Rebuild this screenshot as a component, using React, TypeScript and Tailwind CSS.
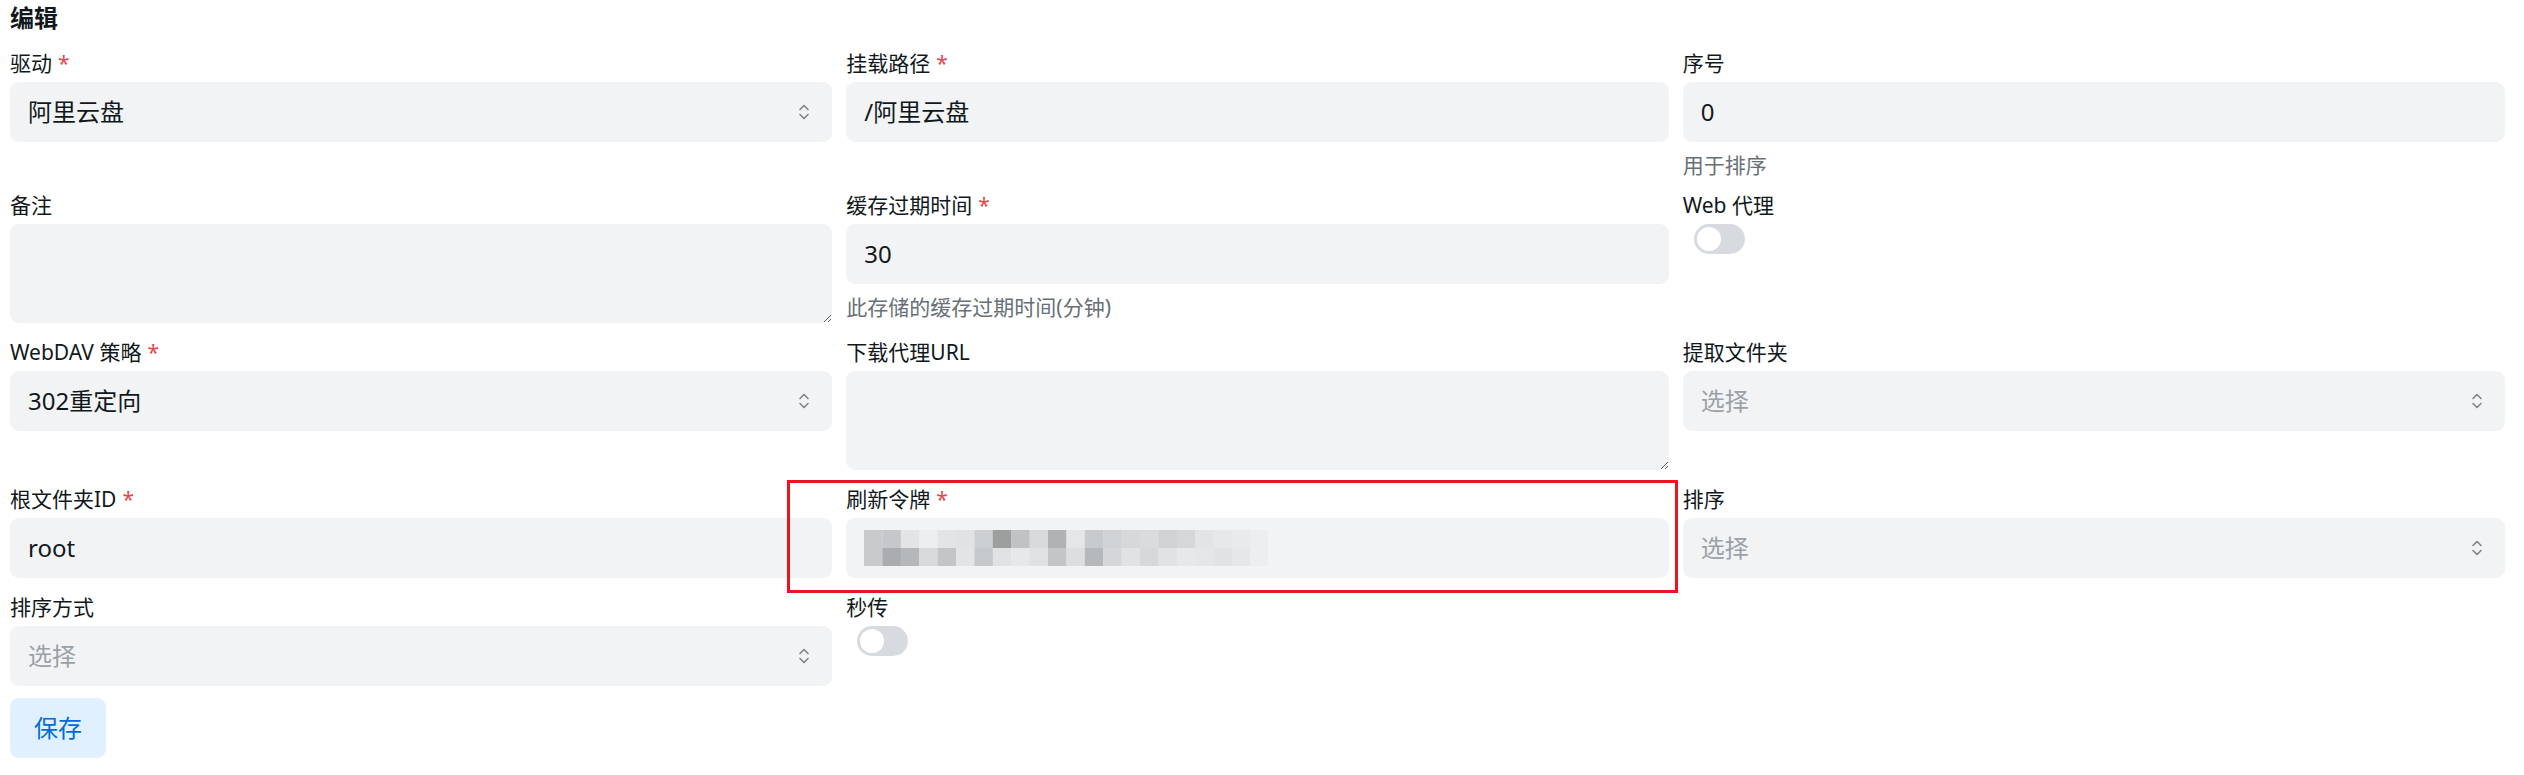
import React from "react";

const font = { fontFamily: '"Noto Sans", "Noto Sans CJK SC", sans-serif' };

const mosaic = [
  ["#c8cacc", "#c5c8ca", "#e2e4e6", "#eceef0", "#e2e4e6", "#e0e2e4", "#cdd0d2", "#9c9f9d", "#c0c2c4", "#d8dadc", "#b0b3b5", "#e4e6e8", "#c8cbcd", "#d0d3d5", "#d6d8da", "#d9dbdd", "#d0d3d5", "#d5d7d9", "#e2e4e6", "#e6e8ea", "#e8eaec", "#eceef0"],
  ["#c8cacc", "#a9adaf", "#b5b8ba", "#d8dadc", "#c3c6c8", "#e2e4e6", "#c6c9cb", "#e0e2e4", "#e6e8ea", "#dfe1e3", "#c3c6c8", "#dcdee0", "#b6b9bb", "#d4d6d8", "#e0e2e4", "#d6d8da", "#e0e2e4", "#e6e8ea", "#e4e6e8", "#e0e2e4", "#e5e7e9", "#eceef0"],
];

function Label({ text, required }: { text: string; required?: boolean }) {
  return (
    <label className="text-[21px] leading-[30px] mb-[4px] font-normal text-[#11181c]">
      {text}
      {required && <span className="ml-[6px] text-[#e5484d]">*</span>}
    </label>
  );
}

function Helper({ text }: { text: string }) {
  return <div className="mt-[12px] text-[21px] leading-[22px] text-[#687076]">{text}</div>;
}

function Chevrons() {
  return (
    <svg width="12" height="20" viewBox="0 0 12 20" fill="none" stroke="#7e868c" strokeWidth="1.6" strokeLinecap="round" strokeLinejoin="round">
      <path d="M2 7.5 6 3.5l4 4" />
      <path d="M2 12.5l4 4 4-4" />
    </svg>
  );
}

function TextInput({ value }: { value: string }) {
  return (
    <div className="h-[60px] rounded-[9px] bg-[#f1f3f5] px-[18px] flex items-center text-[24px] text-[#11181c]">
      {value}
    </div>
  );
}

function Select({ value, placeholder }: { value?: string; placeholder?: string }) {
  return (
    <div className="h-[60px] rounded-[9px] bg-[#f1f3f5] pl-[18px] pr-[22px] flex items-center justify-between text-[24px]">
      {value ? (
        <span className="text-[#11181c]">{value}</span>
      ) : (
        <span className="text-[#9ba1a6]">{placeholder}</span>
      )}
      <Chevrons />
    </div>
  );
}

function Area() {
  return (
    <textarea
      className="block w-full h-[99px] rounded-[9px] bg-[#f1f3f5] px-[18px] py-[12px] text-[24px] outline-none"
      defaultValue=""
    />
  );
}

function Switch() {
  return (
    <div className="ml-[11px] w-[51px] h-[30px] rounded-full bg-[#d7dbdf] flex items-center px-[3px]">
      <div className="w-[24px] h-[24px] rounded-full bg-white" />
    </div>
  );
}

function Token() {
  return (
    <div className="h-[60px] rounded-[9px] bg-[#f1f3f5] px-[18px] flex items-center">
      <svg width="404" height="36" viewBox="0 0 404 36">
        {mosaic.map((row, r) =>
          row.map((c, i) => (
            <rect key={`${r}-${i}`} x={i * 18.4} y={r * 18} width="18.6" height="18.2" fill={c} />
          ))
        )}
      </svg>
    </div>
  );
}

function Field({ children }: { children: React.ReactNode }) {
  return <div className="flex flex-col">{children}</div>;
}

export default function App() {
  return (
    <div className="w-[2524px] min-h-[775px] bg-white pl-[10px] pr-[19px]" style={font}>
      <h2 className="text-[24px] leading-[36px] font-bold text-[#11181c]">编辑</h2>

      <div className="mt-[12px] grid grid-cols-3 gap-x-[14px] gap-y-[14px] items-start">
        <Field>
          <Label text="驱动" required />
          <Select value="阿里云盘" />
        </Field>
        <Field>
          <Label text="挂载路径" required />
          <TextInput value="/阿里云盘" />
        </Field>
        <Field>
          <Label text="序号" />
          <TextInput value="0" />
          <Helper text="用于排序" />
        </Field>

        <Field>
          <Label text="备注" />
          <Area />
        </Field>
        <Field>
          <Label text="缓存过期时间" required />
          <TextInput value="30" />
          <Helper text="此存储的缓存过期时间(分钟)" />
        </Field>
        <Field>
          <Label text="Web 代理" />
          <Switch />
        </Field>

        <Field>
          <Label text="WebDAV 策略" required />
          <Select value="302重定向" />
        </Field>
        <Field>
          <Label text="下载代理URL" />
          <Area />
        </Field>
        <Field>
          <Label text="提取文件夹" />
          <Select placeholder="选择" />
        </Field>

        <Field>
          <Label text="根文件夹ID" required />
          <TextInput value="root" />
        </Field>
        <div className="relative flex flex-col">
          <Label text="刷新令牌" required />
          <Token />
          <div className="pointer-events-none absolute -left-[59px] -top-[4px] -right-[9px] -bottom-[15px] border-[3px] border-[#e8161f]" />
        </div>
        <Field>
          <Label text="排序" />
          <Select placeholder="选择" />
        </Field>

        <Field>
          <Label text="排序方式" />
          <Select placeholder="选择" />
        </Field>
        <Field>
          <Label text="秒传" />
          <Switch />
        </Field>
      </div>

      <button className="mt-[12px] h-[60px] px-[24px] rounded-[9px] bg-[#e1f0ff] text-[24px] text-[#006adc]">
        保存
      </button>
    </div>
  );
}
